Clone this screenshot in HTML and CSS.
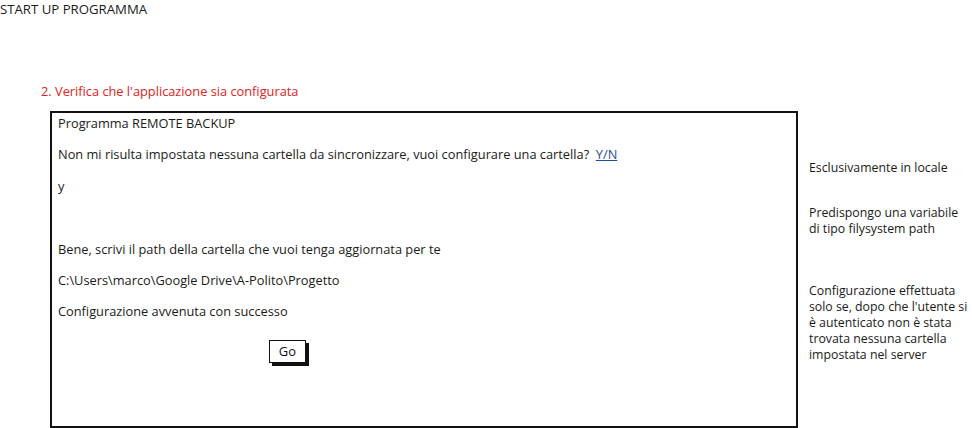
FILE: index.html
```html
<!DOCTYPE html>
<html lang="it">
<head>
<meta charset="utf-8">
<title>Start up programma</title>
<link rel="stylesheet" href="styles.css">
</head>
<body>
<div class="page">
  <h1 class="title">START UP PROGRAMMA</h1>
  <div class="step">2. Verifica che l'applicazione sia configurata</div>
  <div class="row">
    <div class="console">
      <p class="line">Programma REMOTE BACKUP</p>
      <p class="line">Non mi risulta impostata nessuna cartella da sincronizzare, vuoi configurare una cartella?&nbsp; <a class="link" href="#">Y/N</a></p>
      <p class="line">y</p>
      <p class="line">&nbsp;</p>
      <p class="line">Bene, scrivi il path della cartella che vuoi tenga aggiornata per te</p>
      <p class="line">C:\Users\marco\Google Drive\A-Polito\Progetto</p>
      <p class="line">Configurazione avvenuta con successo</p>
      <div class="actions"><button class="btn">Go</button></div>
    </div>
    <div class="notes">
      <p class="note n1">Esclusivamente in locale</p>
      <p class="note n2">Predispongo una variabile<br>di tipo filysystem path</p>
      <p class="note n3">Configurazione effettuata<br>solo se, dopo che l'utente si<br>è autenticato non è stata<br>trovata nessuna cartella<br>impostata nel server</p>
    </div>
  </div>
</div>
</body>
</html>
```
FILE: styles.css
```css
* { box-sizing: border-box; }
html, body { margin: 0; padding: 0; background: #fff; }
body {
  font-family: "Open Sans", "DejaVu Sans", sans-serif;
  font-size: 12.8px;
  color: #1a1a1a;
  width: 972px;
  height: 428px;
  overflow: hidden;
}
.page { display: flex; flex-direction: column; }
.title {
  margin: 0;
  padding: 1px 0 0 0;
  font-size: 13.2px;
  font-weight: normal;
  line-height: 16px;
}
.step {
  margin: 66px 0 0 41px;
  color: #e0231c;
  line-height: 16px;
}
.row {
  display: flex;
  margin: 12px 0 0 50px;
  gap: 11px;
}
.console {
  flex: 0 0 748px;
  height: 317px;
  border: 2px solid #111;
  padding: 2px 0 0 6px;
}
.line {
  margin: 0 0 15.4px 0;
  line-height: 16px;
  white-space: nowrap;
}
.link { color: #1f4e9c; text-decoration: underline; }
.actions { padding: 5px 0 0 211px; }
.btn {
  font: inherit;
  font-size: 13px;
  width: 37px;
  height: 23px;
  padding: 0;
  background: #fff;
  border: 1.5px solid #111;
  box-shadow: 3px 3px 0 #111;
  color: #111;
}
.notes {
  flex: 1 1 auto;
  display: flex;
  flex-direction: column;
  padding-top: 49px;
  font-size: 12.3px;
  white-space: nowrap;
}
.note { margin: 0; line-height: 16px; }
.n2 { margin-top: 29px; }
.n3 { margin-top: 46px; }
```
